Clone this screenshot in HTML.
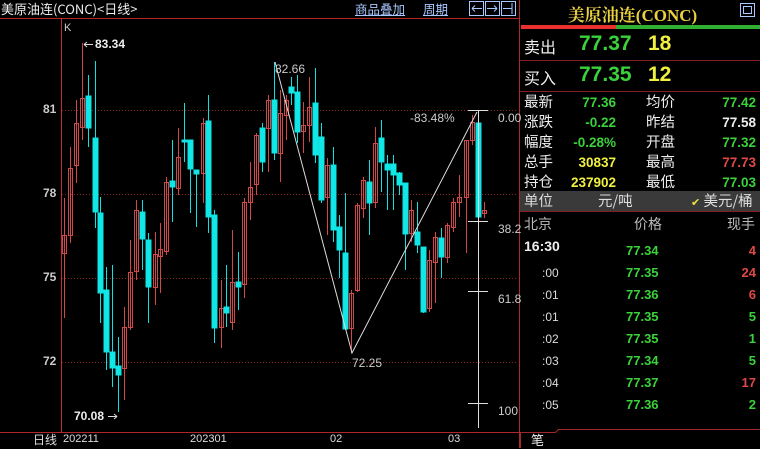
<!DOCTYPE html>
<html><head><meta charset="utf-8"><style>
*{margin:0;padding:0;box-sizing:border-box}
body{width:760px;height:448px;background:#000;overflow:hidden;position:relative;font-family:"Liberation Sans","Noto Sans CJK SC",sans-serif;color:#ddd}
.a{position:absolute;white-space:nowrap}
.cn{font-family:"Noto Sans CJK SC","WenQuanYi Zen Hei",sans-serif}
.g{color:#3ad23a}.y{color:#f0f040}.r{color:#e04848}.w{color:#eee}
.b{font-weight:bold}
</style></head><body>
<svg class="a" style="left:0;top:0" width="760" height="448">
<line x1="0" y1="18.5" x2="519" y2="18.5" stroke="#b02828"/>
<line x1="61.5" y1="18" x2="61.5" y2="432" stroke="#c03030"/>
<line x1="0" y1="432.5" x2="519" y2="432.5" stroke="#b02828"/>
<line x1="519.5" y1="0" x2="519.5" y2="448" stroke="#b02828"/>
<g stroke="#8a2020" stroke-dasharray="1,2">
<line x1="62" y1="110.5" x2="518" y2="110.5"/><line x1="62" y1="194.5" x2="518" y2="194.5"/>
<line x1="62" y1="278.5" x2="518" y2="278.5"/><line x1="62" y1="362.5" x2="518" y2="362.5"/>
</g>
<g stroke="#a8c8ff" fill="none">
<rect x="469.5" y="1.5" width="14" height="14"/><rect x="485.5" y="1.5" width="14" height="14"/><rect x="501.5" y="1.5" width="14" height="14"/>
<path d="M472 8.5h10M472 8.5l3-3M472 8.5l3 3M497 8.5h-10M497 8.5l-3-3M497 8.5l-3 3M503 8.5h9M512 3v11"/>
<rect x="740.5" y="3.5" width="14" height="13"/><rect x="743.5" y="6.5" width="8" height="7"/>
</g>
<g stroke="#d24848" fill="none">
<line x1="64.5" y1="198" x2="64.5" y2="318"/><rect x="62.5" y="235.5" width="4" height="18"/>
<line x1="70.5" y1="147" x2="70.5" y2="243"/><rect x="68.5" y="168.5" width="4" height="67"/>
<line x1="76.5" y1="100" x2="76.5" y2="183"/><rect x="74.5" y="123.5" width="4" height="42"/>
<line x1="82.5" y1="43" x2="82.5" y2="140"/><rect x="80.5" y="98.5" width="4" height="29"/>
<line x1="124.5" y1="307" x2="124.5" y2="400"/><rect x="122.5" y="327.5" width="4" height="41"/>
<line x1="130.5" y1="240" x2="130.5" y2="330"/><rect x="128.5" y="272.5" width="4" height="55"/>
<line x1="136.5" y1="200" x2="136.5" y2="280"/><rect x="134.5" y="210.5" width="4" height="61"/>
<line x1="155.5" y1="232" x2="155.5" y2="305"/><rect x="153.5" y="254.5" width="4" height="33"/>
<line x1="160.5" y1="223" x2="160.5" y2="293"/><rect x="158.5" y="249.5" width="4" height="7"/>
<line x1="166.5" y1="177" x2="166.5" y2="255"/><rect x="164.5" y="182.5" width="4" height="69"/>
<line x1="178.5" y1="128" x2="178.5" y2="195"/><rect x="176.5" y="157.5" width="4" height="31"/>
<line x1="203.5" y1="118" x2="203.5" y2="203"/><rect x="201.5" y="123.5" width="4" height="50"/>
<line x1="221.5" y1="280" x2="221.5" y2="348"/><rect x="219.5" y="308.5" width="4" height="19"/>
<line x1="232.5" y1="230" x2="232.5" y2="330"/><rect x="230.5" y="282.5" width="4" height="40"/>
<line x1="244.5" y1="198" x2="244.5" y2="298"/><rect x="242.5" y="202.5" width="4" height="82"/>
<line x1="250.5" y1="162" x2="250.5" y2="220"/><rect x="248.5" y="187.5" width="4" height="15"/>
<line x1="256.5" y1="133" x2="256.5" y2="195"/><rect x="254.5" y="135.5" width="4" height="49"/>
<line x1="268.5" y1="95" x2="268.5" y2="172"/><rect x="266.5" y="100.5" width="4" height="28"/>
<line x1="280.5" y1="90" x2="280.5" y2="182"/><rect x="278.5" y="113.5" width="4" height="40"/>
<line x1="286.5" y1="95" x2="286.5" y2="140"/><rect x="284.5" y="100.5" width="4" height="15"/>
<line x1="303.5" y1="102" x2="303.5" y2="153"/><rect x="301.5" y="125.5" width="4" height="6"/>
<line x1="309.5" y1="77" x2="309.5" y2="142"/><rect x="307.5" y="107.5" width="4" height="18"/>
<line x1="327.5" y1="158" x2="327.5" y2="235"/><rect x="325.5" y="165.5" width="4" height="32"/>
<line x1="351.5" y1="290" x2="351.5" y2="353"/><rect x="349.5" y="293.5" width="4" height="35"/>
<line x1="357.5" y1="203" x2="357.5" y2="292"/><rect x="355.5" y="205.5" width="4" height="85"/>
<line x1="363.5" y1="177" x2="363.5" y2="218"/><rect x="361.5" y="180.5" width="4" height="28"/>
<line x1="375.5" y1="127" x2="375.5" y2="208"/><rect x="373.5" y="143.5" width="4" height="59"/>
<line x1="411.5" y1="200" x2="411.5" y2="242"/><rect x="409.5" y="210.5" width="4" height="23"/>
<line x1="429.5" y1="250" x2="429.5" y2="312"/><rect x="427.5" y="260.5" width="4" height="48"/>
<line x1="435.5" y1="232" x2="435.5" y2="303"/><rect x="433.5" y="237.5" width="4" height="25"/>
<line x1="447.5" y1="223" x2="447.5" y2="263"/><rect x="445.5" y="225.5" width="4" height="32"/>
<line x1="453.5" y1="198" x2="453.5" y2="232"/><rect x="451.5" y="202.5" width="4" height="25"/>
<line x1="459.5" y1="175" x2="459.5" y2="217"/><rect x="457.5" y="197.5" width="4" height="5"/>
<line x1="466.5" y1="140" x2="466.5" y2="253"/><rect x="464.5" y="140.5" width="4" height="57"/>
<line x1="472.5" y1="115" x2="472.5" y2="145"/><rect x="470.5" y="122.5" width="4" height="18"/>
<line x1="484.5" y1="202" x2="484.5" y2="218"/><rect x="482.5" y="210.5" width="4" height="3"/>
</g>
<g stroke="#10e0e0" fill="#10e8e8">
<line x1="88.5" y1="75" x2="88.5" y2="147"/><rect x="86" y="96" width="5" height="32"/>
<line x1="95.5" y1="61" x2="95.5" y2="228"/><rect x="93" y="138" width="5" height="74"/>
<line x1="100.5" y1="197" x2="100.5" y2="323"/><rect x="98" y="213" width="5" height="80"/>
<line x1="106.5" y1="267" x2="106.5" y2="370"/><rect x="104" y="290" width="5" height="62"/>
<line x1="112.5" y1="265" x2="112.5" y2="387"/><rect x="110" y="352" width="5" height="16"/>
<line x1="118.5" y1="337" x2="118.5" y2="412"/><rect x="116" y="366" width="5" height="9"/>
<line x1="142.5" y1="200" x2="142.5" y2="270"/><rect x="140" y="212" width="5" height="27"/>
<line x1="148.5" y1="233" x2="148.5" y2="323"/><rect x="146" y="240" width="5" height="47"/>
<line x1="172.5" y1="140" x2="172.5" y2="222"/><rect x="170" y="181" width="5" height="6"/>
<line x1="184.5" y1="103" x2="184.5" y2="162"/><rect x="182" y="140" width="5" height="2"/>
<line x1="190.5" y1="140" x2="190.5" y2="213"/><rect x="188" y="140" width="5" height="29"/>
<line x1="196.5" y1="170" x2="196.5" y2="227"/><rect x="194" y="170" width="5" height="4"/>
<line x1="208.5" y1="95" x2="208.5" y2="233"/><rect x="206" y="121" width="5" height="96"/>
<line x1="214.5" y1="210" x2="214.5" y2="343"/><rect x="212" y="215" width="5" height="113"/>
<line x1="226.5" y1="265" x2="226.5" y2="327"/><rect x="224" y="307" width="5" height="6"/>
<line x1="238.5" y1="252" x2="238.5" y2="310"/><rect x="236" y="282" width="5" height="5"/>
<line x1="262.5" y1="123" x2="262.5" y2="172"/><rect x="260" y="128" width="5" height="34"/>
<line x1="274.5" y1="62" x2="274.5" y2="160"/><rect x="272" y="100" width="5" height="53"/>
<line x1="291.5" y1="77" x2="291.5" y2="105"/><rect x="289" y="87" width="5" height="6"/>
<line x1="297.5" y1="75" x2="297.5" y2="143"/><rect x="295" y="92" width="5" height="40"/>
<line x1="315.5" y1="68" x2="315.5" y2="163"/><rect x="313" y="103" width="5" height="52"/>
<line x1="321.5" y1="123" x2="321.5" y2="203"/><rect x="319" y="137" width="5" height="63"/>
<line x1="333.5" y1="147" x2="333.5" y2="242"/><rect x="331" y="165" width="5" height="65"/>
<line x1="339.5" y1="215" x2="339.5" y2="278"/><rect x="337" y="227" width="5" height="23"/>
<line x1="345.5" y1="193" x2="345.5" y2="330"/><rect x="343" y="253" width="5" height="76"/>
<line x1="369.5" y1="160" x2="369.5" y2="235"/><rect x="367" y="182" width="5" height="21"/>
<line x1="381.5" y1="120" x2="381.5" y2="192"/><rect x="379" y="138" width="5" height="24"/>
<line x1="387.5" y1="155" x2="387.5" y2="210"/><rect x="385" y="164" width="5" height="6"/>
<line x1="393.5" y1="155" x2="393.5" y2="210"/><rect x="391" y="164" width="5" height="11"/>
<line x1="399.5" y1="172" x2="399.5" y2="195"/><rect x="397" y="173" width="5" height="12"/>
<line x1="405.5" y1="183" x2="405.5" y2="270"/><rect x="403" y="183" width="5" height="51"/>
<line x1="417.5" y1="202" x2="417.5" y2="253"/><rect x="415" y="232" width="5" height="13"/>
<line x1="423.5" y1="247" x2="423.5" y2="313"/><rect x="421" y="247" width="5" height="65"/>
<line x1="441.5" y1="228" x2="441.5" y2="278"/><rect x="439" y="238" width="5" height="19"/>
<line x1="478.5" y1="123" x2="478.5" y2="220"/><rect x="476" y="123" width="5" height="94"/>
</g>
<polyline points="275,62 352,353 477,112" fill="none" stroke="#ddd" stroke-width="1"/>
<g stroke="#ddd">
<line x1="468" y1="110.5" x2="488" y2="110.5"/><line x1="468" y1="221.5" x2="488" y2="221.5"/>
<line x1="468" y1="291.5" x2="488" y2="291.5"/><line x1="468" y1="403.5" x2="488" y2="403.5"/>
<line x1="478.5" y1="110" x2="478.5" y2="428"/>
<line x1="84" y1="44.5" x2="93" y2="44.5"/><path d="M84 44.5l3-2.5M84 44.5l3 2.5" fill="none"/>
<line x1="108" y1="416.5" x2="117" y2="416.5"/><path d="M117 416.5l-3-2.5M117 416.5l-3 2.5" fill="none"/>
</g>
<rect x="521" y="25" width="95" height="4" fill="#e83030"/><rect x="616" y="25" width="144" height="4" fill="#30b030"/>
<g stroke="#802020"><line x1="520" y1="60.5" x2="760" y2="60.5"/><line x1="520" y1="91.5" x2="760" y2="91.5"/></g>
<rect x="520" y="191" width="240" height="20" fill="#3a3a3a"/>
<line x1="520" y1="211.5" x2="760" y2="211.5" stroke="#802020"/>
<path d="M520.5 448V432.5h35l3 -3H760" fill="none" stroke="#a02828"/>
</svg>
<div class="a cn" style="left:1px;top:0;font-size:13px;color:#eee;line-height:18px">美原油连(CONC)&lt;日线&gt;</div>
<div class="a cn" style="left:355px;top:0;font-size:12.5px;color:#a8c8ff;line-height:18px;text-decoration:underline">商品叠加</div>
<div class="a cn" style="left:423px;top:0;font-size:12.5px;color:#a8c8ff;line-height:18px;text-decoration:underline">周期</div>
<div class="a" style="left:64px;top:22px;font-size:11px;color:#ccc">K</div>
<div class="a b" style="left:95px;top:37px;font-size:12px;color:#eee">83.34</div>
<div class="a b" style="left:74px;top:409px;font-size:12px;color:#eee">70.08</div>
<div class="a" style="left:275px;top:62px;font-size:12px;color:#ccc">82.66</div>
<div class="a" style="left:352px;top:356px;font-size:12px;color:#ccc">72.25</div>
<div class="a" style="left:410px;top:111px;font-size:12px;color:#ccc">-83.48%</div>
<div class="a" style="left:498px;top:111px;font-size:12px;color:#ccc">0.00</div>
<div class="a" style="left:498px;top:222px;font-size:12px;color:#ccc">38.2</div>
<div class="a" style="left:498px;top:292px;font-size:12px;color:#ccc">61.8</div>
<div class="a" style="left:498px;top:404px;font-size:12px;color:#ccc">100</div>
<div class="a b" style="left:43px;top:102px;font-size:12px;color:#ccc">81</div>
<div class="a b" style="left:43px;top:186px;font-size:12px;color:#ccc">78</div>
<div class="a b" style="left:43px;top:270px;font-size:12px;color:#ccc">75</div>
<div class="a b" style="left:43px;top:354px;font-size:12px;color:#ccc">72</div>
<div class="a cn" style="left:33px;top:432px;font-size:12px;color:#ddd;line-height:16px">日线</div>
<div class="a" style="left:63px;top:433px;font-size:11px;color:#ddd">202211</div>
<div class="a" style="left:190px;top:433px;font-size:11px;color:#ddd">202301</div>
<div class="a" style="left:330px;top:433px;font-size:11px;color:#ddd">02</div>
<div class="a" style="left:448px;top:433px;font-size:11px;color:#ddd">03</div>
<div class="a" style="left:520px;top:1px;width:225px;text-align:center;font-family:'Liberation Serif','Noto Serif CJK SC',serif;font-size:17px;color:#e8d040;font-weight:bold">美原油连(CONC)</div>
<div class="a cn" style="left:524px;top:34px;font-size:16px;color:#eee">卖出</div>
<div class="a b g" style="left:579px;top:32px;font-size:21px">77.37</div>
<div class="a b y" style="left:648px;top:32px;font-size:21px">18</div>
<div class="a cn" style="left:524px;top:65px;font-size:16px;color:#eee">买入</div>
<div class="a b g" style="left:579px;top:63px;font-size:21px">77.35</div>
<div class="a b y" style="left:648px;top:63px;font-size:21px">12</div>
<div class="a cn" style="left:524px;top:92px;font-size:14.5px;line-height:20px;color:#eee">最新<br>涨跌<br>幅度<br>总手<br>持仓</div>
<div class="a cn" style="left:646px;top:92px;font-size:14.5px;line-height:20px;color:#eee">均价<br>昨结<br>开盘<br>最高<br>最低</div>
<div class="a b" style="left:555px;width:61px;text-align:right;top:93px;font-size:13.5px;line-height:20px"><span class="g">77.36</span><br><span class="g">-0.22</span><br><span class="g">-0.28%</span><br><span class="y">30837</span><br><span class="y">237902</span></div>
<div class="a b" style="left:695px;width:61px;text-align:right;top:93px;font-size:13.5px;line-height:20px"><span class="g">77.42</span><br><span class="w">77.58</span><br><span class="g">77.32</span><br><span class="r">77.73</span><br><span class="g">77.03</span></div>
<div class="a cn" style="left:524px;top:192px;font-size:14.5px;color:#ddd;line-height:18px">单位</div>
<div class="a cn" style="left:598px;top:192px;font-size:14.5px;color:#ddd;line-height:18px">元/吨</div>
<div class="a cn" style="left:691px;top:192px;font-size:14.5px;color:#ddd;line-height:18px"><span style="color:#f0e040;font-size:11px">✔</span> 美元/桶</div>
<div class="a cn" style="left:524px;top:214px;font-size:14px;color:#bbb">北京</div>
<div class="a cn" style="left:634px;top:214px;font-size:14px;color:#bbb">价格</div>
<div class="a cn" style="left:727px;top:214px;font-size:14px;color:#bbb">现手</div>
<div class="a b" style="left:524px;top:238px;font-size:14px;color:#eee">16:30</div>
<div class="a" style="left:542px;top:262px;font-size:12px;line-height:22px;color:#ddd">:00<br>:01<br>:01<br>:02<br>:03<br>:04<br>:05</div>
<div class="a b g" style="left:626px;top:240px;font-size:13px;line-height:22px">77.34<br>77.35<br>77.36<br>77.35<br>77.35<br>77.34<br>77.37<br>77.36</div>
<div class="a b" style="left:700px;width:56px;text-align:right;top:240px;font-size:13px;line-height:22px"><span class="r">4</span><br><span class="r">24</span><br><span class="r">6</span><br><span class="g">5</span><br><span class="g">1</span><br><span class="g">5</span><br><span class="r">17</span><br><span class="g">2</span></div>
<div class="a cn" style="left:531px;top:432px;font-size:13px;color:#eee;line-height:16px">笔</div>
</body></html>
